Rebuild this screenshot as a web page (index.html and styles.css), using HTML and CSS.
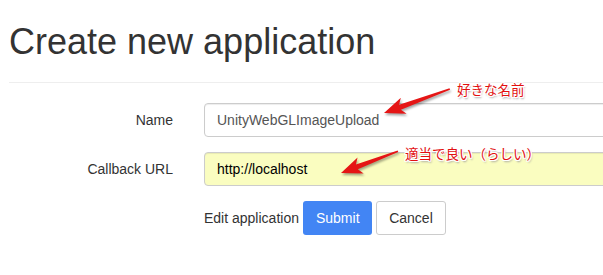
FILE: index.html
```html
<!DOCTYPE html>
<html lang="ja">

<head>
    <meta charset="UTF-8">
    <meta name="viewport" content="width=device-width, initial-scale=1.0">
    <title>Create new application</title>
    <link rel="stylesheet" href="styles.css">
</head>

<body>
    <div class="container">
        <div class="page-header">
            <h1>Create new application</h1>
        </div>
        <form class="app-form">
            <div class="form-group">
                <label for="name">Name</label>
                <input type="text" id="name" class="form-control" value="UnityWebGLImageUpload">
            </div>
            <div class="form-group">
                <label for="callback">Callback URL</label>
                <input type="text" id="callback" class="form-control autofill" value="http://localhost">
            </div>
            <div class="form-actions">
                <span class="edit-link">Edit application</span>
                <button type="button" class="btn btn-primary">Submit</button>
                <button type="button" class="btn btn-default">Cancel</button>
            </div>
        </form>
    </div>

    <!-- annotations drawn over the screenshot -->
    <svg class="arrows" width="603" height="275" viewBox="0 0 603 275">
        <polygon transform="translate(384,113) rotate(-20)" points="70,-0.8 17,-2.6 21,-8.5 0,0 21,8.5 17,2.6 70,0.8"/>
        <polygon transform="translate(341,173) rotate(-21)" points="61,-0.8 17,-2.6 21,-8.5 0,0 21,8.5 17,2.6 61,0.8"/>
    </svg>
    <span class="note note-name">好きな名前</span>
    <span class="note note-url">適当で良い（らしい）</span>
</body>

</html>
```

FILE: styles.css
```css
* {
    box-sizing: border-box;
}

body {
    margin: 0;
    font-family: "Liberation Sans", Arial, sans-serif;
    font-size: 14px;
    color: #333;
    background: #fff;
    overflow: hidden;
}

.container {
    padding-left: 9px;
}

.page-header {
    padding-bottom: 20px;
    border-bottom: 1px solid #eee;
    margin-bottom: 20px;
}

.page-header>h1 {
    margin: 22px 0 0;
    font-size: 36px;
    line-height: 40px;
    font-weight: 400;
    color: #333;
}

/* the inputs run on past the right edge of the window */
.app-form {
    overflow: hidden;
}

.form-group {
    display: flex;
    align-items: center;
    margin-bottom: 15px;
}

.form-group>label {
    width: 164px;
    flex-shrink: 0;
    margin-right: 31px;
    text-align: right;
    white-space: nowrap;
    color: #333;
}

.form-control {
    flex: 1;
    min-width: 0;
    height: 34px;
    margin-right: -6px;
    padding: 6px 12px;
    border: 1px solid #ccc;
    border-radius: 4px;
    font-family: inherit;
    font-size: 14px;
    color: #555;
    background: #fff;
    box-shadow: inset 0 1px 1px rgba(0, 0, 0, .075);
}

.form-control.autofill {
    background: #fafdc0;
    color: #000;
}

.form-actions {
    display: flex;
    align-items: center;
    padding-left: 195px;
    gap: 4px;
}

.edit-link {
    color: #333;
}

.btn {
    height: 34px;
    padding: 6px 12px;
    border: 1px solid transparent;
    border-radius: 3px;
    font-family: inherit;
    font-size: 14px;
    line-height: 20px;
    cursor: pointer;
}

.btn-primary {
    width: 69px;
    background: #4285f4;
    color: #fff;
}

.btn-default {
    width: 70px;
    background: #fff;
    border-color: #ccc;
    color: #333;
}

.arrows {
    position: absolute;
    top: 0;
    left: 0;
    pointer-events: none;
    fill: #e51515;
    filter: drop-shadow(1px 2px 1px rgba(0, 0, 0, .35));
}

.note {
    position: absolute;
    font-family: "Noto Sans CJK JP", sans-serif;
    font-size: 13.5px;
    line-height: 16px;
    color: #e21010;
    white-space: nowrap;
    text-shadow: 1px 0 0 #fff, -1px 0 0 #fff, 0 1px 0 #fff, 0 -1px 0 #fff,
        1px 1px 0 #fff, -1px -1px 0 #fff, 1px -1px 0 #fff, -1px 1px 0 #fff,
        1px 2px 2px #999;
}

.note-name {
    top: 81px;
    left: 457px;
}

.note-url {
    top: 145px;
    left: 405px;
}
```
